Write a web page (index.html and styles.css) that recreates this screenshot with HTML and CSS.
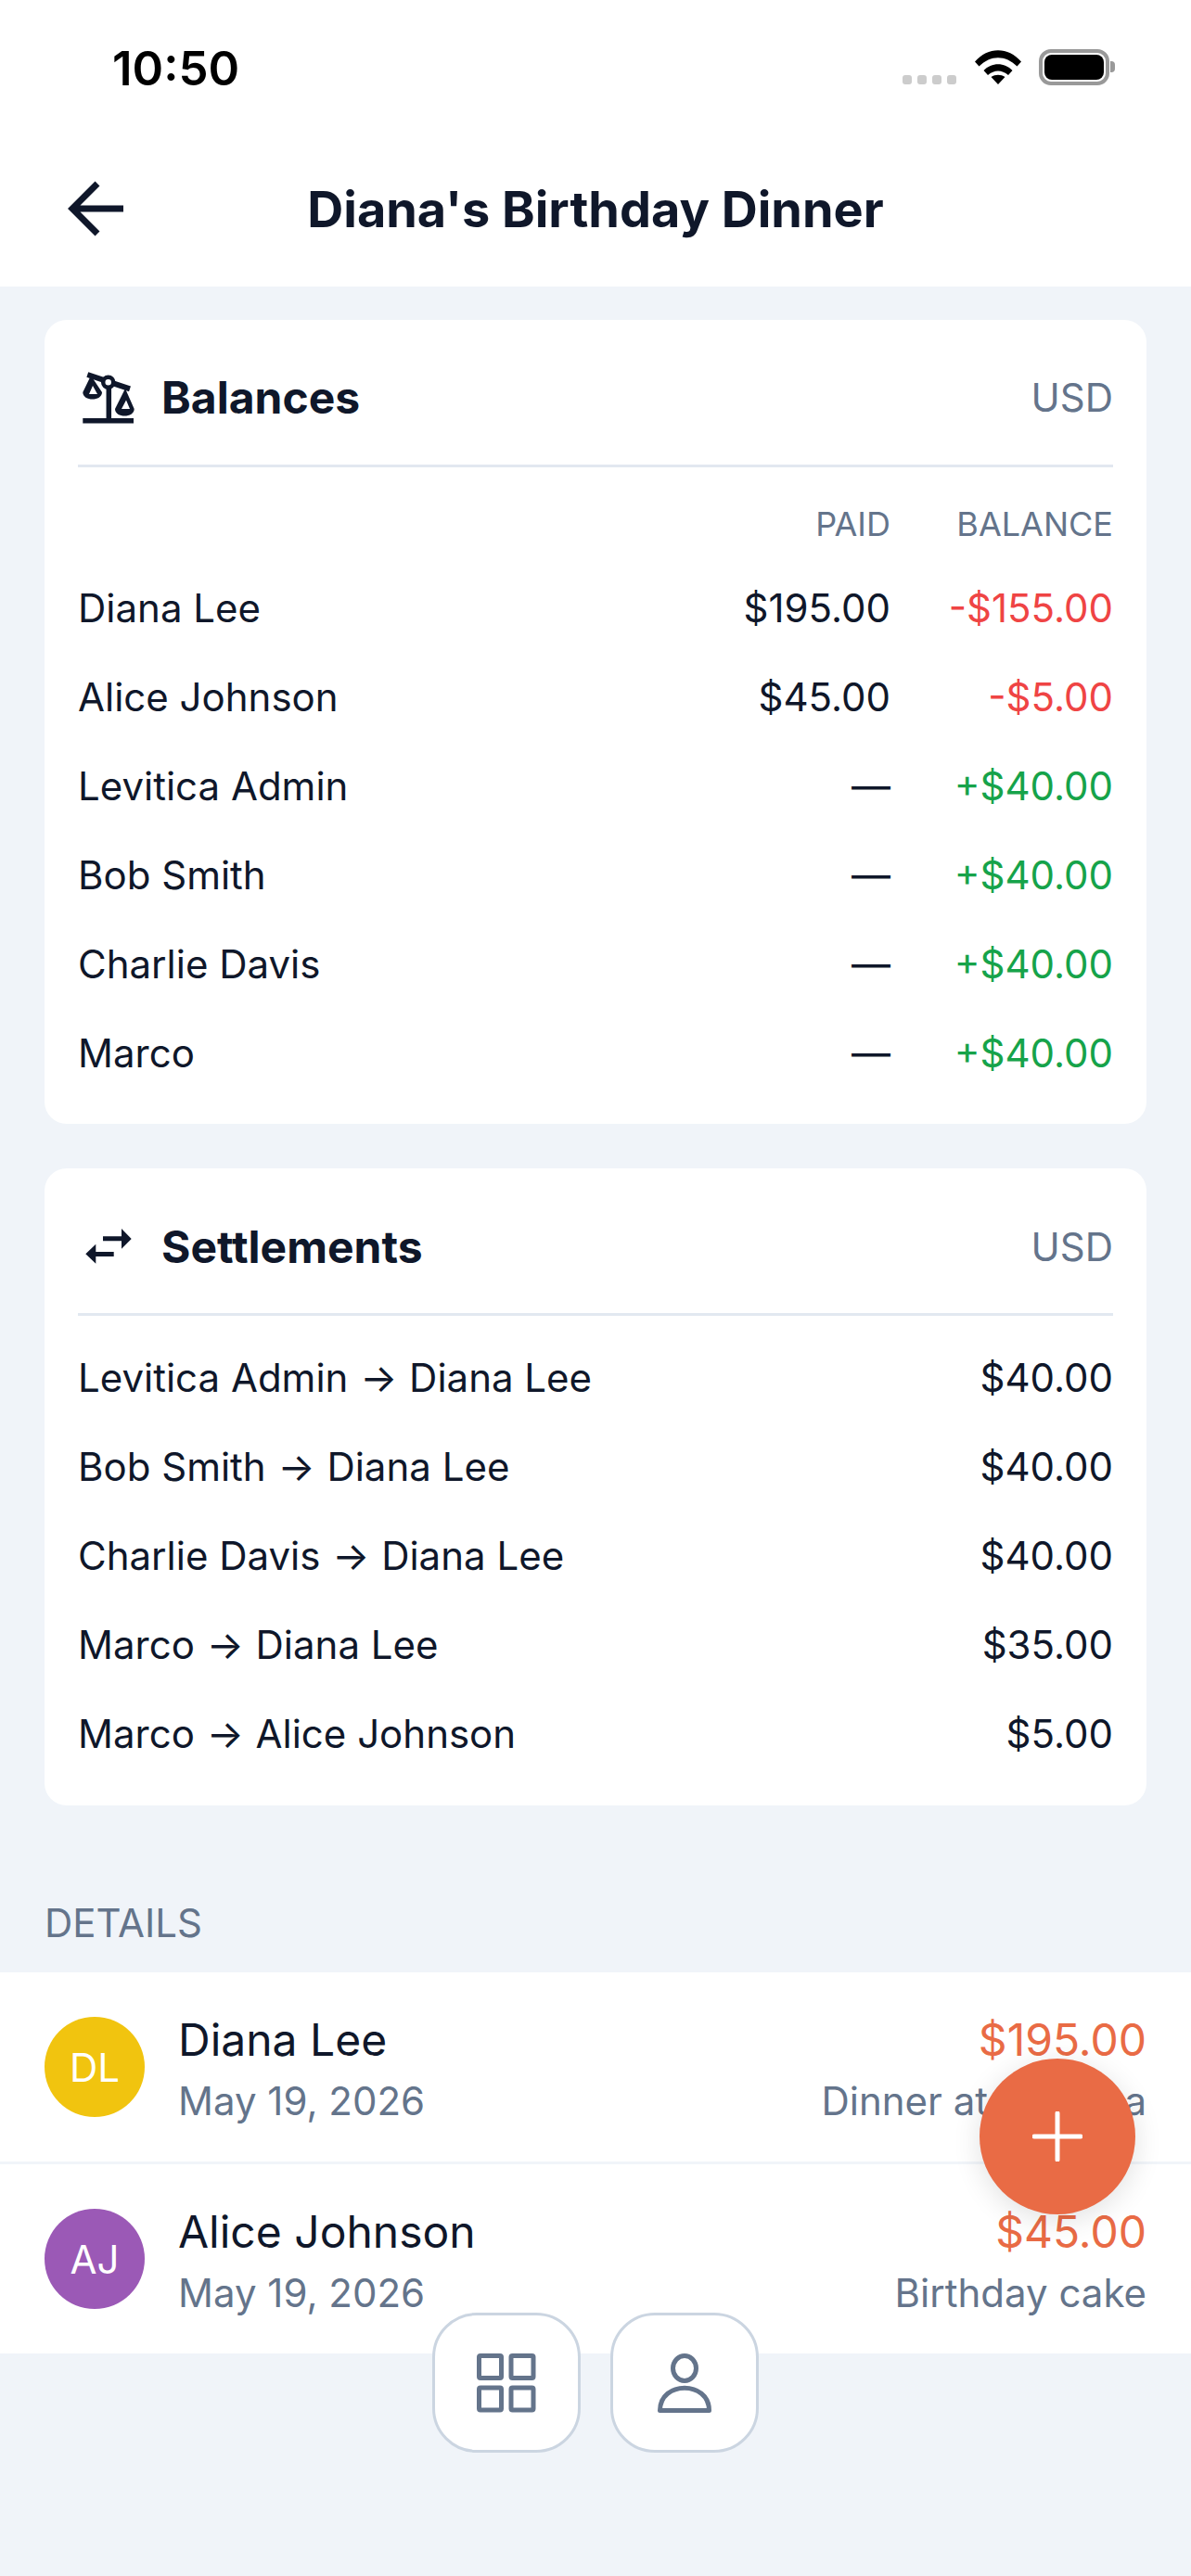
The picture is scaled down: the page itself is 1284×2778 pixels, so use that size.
FILE: index.html
```html
<!DOCTYPE html>
<html lang="en">
<head>
    <meta charset="UTF-8">
    <meta name="viewport" content="width=device-width, initial-scale=1.0">
    <title>Diana's Birthday Dinner</title>
    <link rel="stylesheet" href="styles.css">
</head>
<body>
    <div class="screen">
        <div class="status-bar">
            <span class="clock">10:50</span>
            <div class="status-icons">
                <div class="signal"><i></i><i></i><i></i><i></i></div>
                <svg class="wifi" width="50" height="37" viewBox="0 0 50 37">
                    <path d="M0 12.5C14-4 36-4 50 12.5L45.5 17.5C33 5 17 5 4.500 17.500Z"/>
                    <path d="M9.500 22C18 13 32 13 40.500 22L36 27C29 21 21 21 14 27Z"/>
                    <path d="M17.500 29C22 26 28 26 32.500 29L25 37Z"/>
                </svg>
                <div class="battery"><div class="battery-fill"></div></div>
                <div class="battery-cap"></div>
            </div>
        </div>

        <header class="nav-bar">
            <svg class="back" width="62" height="62" viewBox="0 0 62 62">
                <path d="M33 4L6 31L33 58M6 31H61" fill="none" stroke="#0f172a" stroke-width="7"/>
            </svg>
            <h1>Diana's Birthday Dinner</h1>
        </header>

        <section class="card balances">
            <div class="card-head">
                <svg class="card-icon" width="64" height="64" viewBox="0 0 64 64">
                    <path d="M10.300 8L56 23.300" stroke="#0f172a" stroke-width="6" fill="none"/>
                    <path d="M33.300 16V58M5.300 57.800H60" stroke="#0f172a" stroke-width="5.500" fill="none"/>
                    <circle cx="32.700" cy="16.300" r="5.500" fill="#fff" stroke="#0f172a" stroke-width="4.500"/>
                    <path fill-rule="evenodd" fill="#0f172a" d="M14 9L5.300 27C5.300 37 26 37 26 27ZM16 20L12 29H21Z"/>
                    <path fill-rule="evenodd" fill="#0f172a" d="M51 23L40 45C40 55 60.700 55 60.700 45ZM52 35.500L47 45H56Z"/>
                </svg>
                <h2>Balances</h2>
                <span class="currency">USD</span>
            </div>
            <div class="bal-row bal-labels"><span></span><span class="paid">PAID</span><span class="bal">BALANCE</span></div>
            <div class="bal-row"><span>Diana Lee</span><span class="paid">$195.00</span><span class="bal neg">-$155.00</span></div>
            <div class="bal-row"><span>Alice Johnson</span><span class="paid">$45.00</span><span class="bal neg">-$5.00</span></div>
            <div class="bal-row"><span>Levitica Admin</span><span class="paid">—</span><span class="bal pos">+$40.00</span></div>
            <div class="bal-row"><span>Bob Smith</span><span class="paid">—</span><span class="bal pos">+$40.00</span></div>
            <div class="bal-row"><span>Charlie Davis</span><span class="paid">—</span><span class="bal pos">+$40.00</span></div>
            <div class="bal-row"><span>Marco</span><span class="paid">—</span><span class="bal pos">+$40.00</span></div>
        </section>

        <section class="card settlements">
            <div class="card-head">
                <svg class="card-icon" width="64" height="64" viewBox="0 0 64 64">
                    <path fill="#0f172a" d="M27 21.300H47V13L57.700 24L47 34.700V26.300H27Z"/>
                    <path fill="#0f172a" d="M38.700 38H19.300V29.700L8.300 40.300L19.300 50.700V43H38.700Z"/>
                </svg>
                <h2>Settlements</h2>
                <span class="currency">USD</span>
            </div>
            <div class="settle-list">
                <div class="settle-row"><span>Levitica Admin <span class="arrow">→</span> Diana Lee</span><span>$40.00</span></div>
                <div class="settle-row"><span>Bob Smith <span class="arrow">→</span> Diana Lee</span><span>$40.00</span></div>
                <div class="settle-row"><span>Charlie Davis <span class="arrow">→</span> Diana Lee</span><span>$40.00</span></div>
                <div class="settle-row"><span>Marco <span class="arrow">→</span> Diana Lee</span><span>$35.00</span></div>
                <div class="settle-row"><span>Marco <span class="arrow">→</span> Alice Johnson</span><span>$5.00</span></div>
            </div>
        </section>

        <div class="section-label">DETAILS</div>
        <div class="expenses">
            <div class="expense">
                <div class="avatar yellow">DL</div>
                <div class="who"><div class="who-name">Diana Lee</div><div class="sub">May 19, 2026</div></div>
                <div class="what"><div class="amount">$195.00</div><div class="sub">Dinner at Taverna</div></div>
            </div>
            <div class="expense">
                <div class="avatar purple">AJ</div>
                <div class="who"><div class="who-name">Alice Johnson</div><div class="sub">May 19, 2026</div></div>
                <div class="what"><div class="amount">$45.00</div><div class="sub">Birthday cake</div></div>
            </div>
        </div>

        <div class="fab">
            <svg width="54" height="54" viewBox="0 0 54 54">
                <path d="M27 2V52M2 27H52" stroke="#fff" stroke-width="5" stroke-linecap="round"/>
            </svg>
        </div>

        <nav class="tabs">
            <div class="tab">
                <svg width="64" height="64" viewBox="0 0 64 64" fill="none" stroke="#64748b" stroke-width="5" stroke-linejoin="round">
                    <rect x="2.500" y="2.500" width="24" height="24" rx="1.500"/>
                    <rect x="37" y="2.500" width="24" height="24" rx="1.500"/>
                    <rect x="2.500" y="37" width="24" height="24" rx="1.500"/>
                    <rect x="37" y="37" width="24" height="24" rx="1.500"/>
                </svg>
            </div>
            <div class="tab">
                <svg width="64" height="64" viewBox="0 0 64 64" fill="none" stroke="#64748b" stroke-width="5" stroke-linejoin="round">
                    <ellipse cx="32" cy="16" rx="12.500" ry="13.500"/>
                    <path d="M5.500 61.500C5.500 29 58.500 29 58.500 61.500Z"/>
                </svg>
            </div>
        </nav>
    </div>
</body>
</html>
```

FILE: styles.css
```css
* {
    box-sizing: border-box;
}
html, body {
    margin: 0;
    padding: 0;
}
body {
    font-family: Inter, "Liberation Sans", sans-serif;
    color: #0f172a;
    background-color: #f0f4f9;
}
.screen {
    position: relative;
    width: 1284px;
    height: 2778px;
    overflow: hidden;
    background-color: #f0f4f9;
}

.status-bar {
    height: 132px;
    background: #fff;
    display: flex;
    justify-content: space-between;
    padding: 53px 82px 0 121px;
}
.clock {
    font-size: 51px;
    font-weight: 600;
    line-height: 40px;
    margin-top: 1px;
    color: #000;
}
.status-icons {
    display: flex;
    align-items: flex-start;
}
.signal {
    display: flex;
    gap: 6px;
    margin-top: 28px;
    margin-right: 20px;
}
.signal i {
    width: 10px;
    height: 10px;
    border-radius: 3px;
    background: #ccc;
}
.wifi {
    margin-top: 1px;
    margin-right: 19px;
}
.battery {
    width: 76px;
    height: 39px;
    border: 4px solid #999;
    border-radius: 13px;
    padding: 2px;
}
.battery-fill {
    width: 100%;
    height: 100%;
    background: #000;
    border-radius: 8px;
}
.battery-cap {
    width: 5px;
    height: 12px;
    margin: 13px 0 0 1px;
    background: #999;
    border-radius: 0 4px 4px 0;
}

.nav-bar {
    position: relative;
    height: 177px;
    background: #fff;
    display: flex;
    align-items: center;
    justify-content: center;
}
.nav-bar h1 {
    margin: 10px 0 0;
    font-size: 54px;
    font-weight: 700;
    color: #0f172a;
}
.back {
    position: absolute;
    left: 72px;
    top: 62px;
}

.card {
    background: #fff;
    margin: 0 48px;
    border-radius: 24px;
    padding: 0 36px;
}
.balances {
    margin-top: 36px;
    height: 867px;
}
.settlements {
    margin-top: 48px;
    height: 687px;
}
.card-head {
    display: flex;
    align-items: center;
    height: 159px;
    padding-top: 10px;
    border-bottom: 3px solid #e2e8f0;
}
.settlements .card-head {
    padding-top: 12px;
}
.card-icon {
    margin-right: 26px;
    flex: none;
}
.card-head h2 {
    margin: 0;
    font-size: 48px;
    font-weight: 700;
    flex: 1;
}
.currency {
    font-size: 42px;
    color: #64748b;
}

.bal-row {
    display: flex;
    align-items: center;
    height: 96px;
    font-size: 42px;
}
.bal-row span:first-child {
    flex: 1;
}
.paid {
    width: 200px;
    text-align: right;
}
.bal {
    width: 240px;
    text-align: right;
}
.bal-labels {
    height: 103px;
    padding-top: 19px;
    font-size: 36px;
    color: #64748b;
}
.neg {
    color: #ef4444;
}
.pos {
    color: #16a34a;
}

.settle-row {
    display: flex;
    justify-content: space-between;
    align-items: center;
    height: 96px;
    font-size: 42px;
}
.settle-list {
    padding-top: 18px;
}
.arrow {
    margin: 0 1px;
}

.section-label {
    margin: 102px 48px 0;
    height: 78px;
    font-size: 42px;
    line-height: 50px;
    color: #64748b;
}
.expenses {
    background: #fff;
}
.expense {
    display: flex;
    align-items: center;
    height: 204px;
    padding: 0 48px;
}
.expense + .expense {
    height: 207px;
    border-top: 3px solid #f1f5f9;
}
.avatar {
    width: 108px;
    height: 108px;
    border-radius: 50%;
    color: #fff;
    font-size: 42px;
    display: flex;
    align-items: center;
    justify-content: center;
    margin-right: 36px;
    flex: none;
}
.yellow {
    background: #f1c40f;
}
.purple {
    background: #9b59b6;
}
.who {
    flex: 1;
    padding-top: 7px;
}
.what {
    text-align: right;
    padding-top: 7px;
}
.who-name, .amount {
    font-size: 48px;
    line-height: 66px;
}
.amount {
    color: #e96b45;
}
.sub {
    font-size: 42px;
    line-height: 66px;
    color: #64748b;
}

.fab {
    position: absolute;
    left: 1056px;
    top: 2220px;
    width: 168px;
    height: 168px;
    border-radius: 50%;
    background: #e96b45;
    box-shadow: 0 6px 30px rgba(0, 0, 0, 0.12);
    display: flex;
    align-items: center;
    justify-content: center;
}
.tabs {
    position: absolute;
    left: 466px;
    top: 2494px;
    display: flex;
    gap: 32px;
}
.tab {
    width: 160px;
    height: 151px;
    background: #fff;
    border: 3px solid #cbd5e1;
    border-radius: 48px;
    display: flex;
    align-items: center;
    justify-content: center;
}
```
